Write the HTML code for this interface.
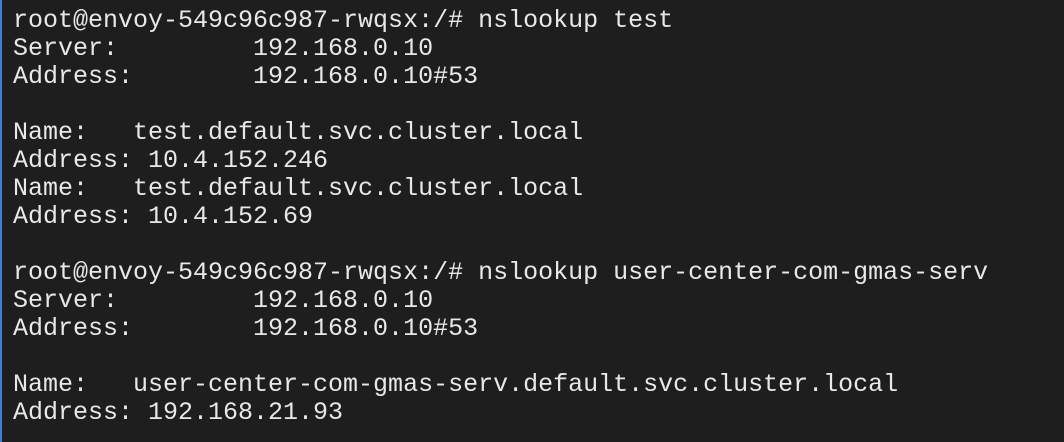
<!DOCTYPE html>
<html><head><meta charset="utf-8"><style>
html,body{margin:0;padding:0;}
body{width:1064px;height:442px;background:#1e1e1e;overflow:hidden;position:relative;}
.bar{position:absolute;left:0;top:0;width:2px;height:442px;background:#3b7fd8;}
pre{margin:0;position:absolute;left:13px;top:7px;font-family:"Liberation Mono",monospace;font-size:25px;line-height:28px;color:#e8e8e8;letter-spacing:0;}
</style></head><body>
<div class="bar"></div>
<pre>root@envoy-549c96c987-rwqsx:/# nslookup test
Server:         192.168.0.10
Address:        192.168.0.10#53

Name:   test.default.svc.cluster.local
Address: 10.4.152.246
Name:   test.default.svc.cluster.local
Address: 10.4.152.69

root@envoy-549c96c987-rwqsx:/# nslookup user-center-com-gmas-serv
Server:         192.168.0.10
Address:        192.168.0.10#53

Name:   user-center-com-gmas-serv.default.svc.cluster.local
Address: 192.168.21.93</pre>
</body></html>
